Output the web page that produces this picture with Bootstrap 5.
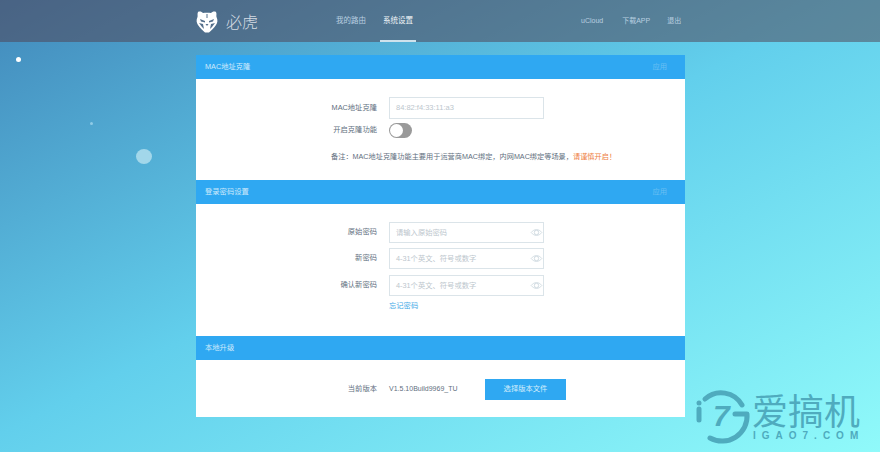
<!DOCTYPE html>
<html lang="zh-CN">
<head>
    <meta charset="UTF-8">
    <meta name="viewport" content="width=device-width, initial-scale=1.0">
    <title>必虎 - 系统设置</title>
    <link href="https://cdn.jsdelivr.net/npm/bootstrap@5.3.0/dist/css/bootstrap.min.css" rel="stylesheet">
    <style>
        html, body { height: 100%; }
        body {
            position: relative;
            overflow: hidden;
            background: linear-gradient(to bottom right, #4289bb 0%, #62cfec 48%, #90fafa 100%);
            font-family: "Liberation Sans", "Noto Sans CJK SC", sans-serif;
            font-size: 7.3px;
            color: #5f6f80;
        }
        .top-bar {
            height: 42px;
            padding-left: 196px;
            background: rgba(80, 62, 78, .5);
        }
        .brand-name {
            width: 140px;
            font-family: "Noto Sans CJK SC", sans-serif;
            font-weight: 300;
            font-size: 16px;
            color: #d5dce3;
        }
        .top-link {
            height: 42px;
            line-height: 42px;
            color: #b9cfe0;
            text-decoration: none;
        }
        .top-link.on {
            color: #f2f6f9;
            padding: 0 3px;
            border-bottom: 2px solid #cfe2ec;
        }
        .links-left { width: 245px; gap: 14px; font-size: 7.5px; }
        .links-right { font-size: 7px; }
        .link-ucloud { margin-right: 19px; }
        .link-app { margin-right: 17px; }
        .panel-box {
            width: 489px;
            margin: 13px 0 0 196px;
            background: #fff;
        }
        .panel-head {
            height: 24px;
            padding: 1px 18px 0 9px;
            background: #2fa8f2;
            color: #cfeafc;
        }
        .apply-text { color: #69bff2; }
        .panel-part { padding-top: 18px; }
        .part-mac { height: 101px; }
        .part-pwd { height: 132px; }
        .part-ver { height: 57px; padding-top: 19px; }
        .field-row { display: flex; align-items: center; gap: 12px; }
        .field-label { width: 181px; text-align: right; }
        .field-box {
            position: relative;
            width: 155px;
            height: 21px;
            line-height: 19px;
            padding: 0 6px;
            border: 1px solid #dbe4e9;
            color: #bcc6cd;
        }
        .eye-icon { position: absolute; right: 0; top: 5px; }
        .row-gap { margin-top: 5px; }
        .row-gap-b { margin-top: 6px; }
        .mac-box { height: 22px; line-height: 20px; font-size: 7.5px; }
        .switch-off {
            position: relative;
            width: 23px;
            height: 15px;
            border-radius: 8px;
            background: #9a9a9a;
        }
        .switch-off::after {
            content: "";
            position: absolute;
            left: 1px;
            top: 1px;
            width: 13px;
            height: 13px;
            border-radius: 50%;
            background: #fff;
        }
        .note-line { margin: 13px 0 0 135px; line-height: 12px; font-size: 7.2px; }
        .warn-text { color: #ee7d3e; }
        .forget-link { display: block; margin: 4px 0 0 193px; color: #3fa9e6; text-decoration: none; line-height: 12px; }
        .ver-text { width: 81px; font-size: 7px; }
        .pick-btn {
            width: 81px;
            height: 21px;
            margin-left: 3px;
            padding: 0;
            border: 0;
            border-radius: 0;
            background: #2fa8f2;
            color: #d5eefc;
            font-size: 7.3px;
        }
        .dot-spot { position: absolute; border-radius: 50%; }
        .dot-a { left: 16px; top: 57px; width: 5px; height: 5px; background: #fff; }
        .dot-b { left: 90px; top: 122px; width: 3px; height: 3px; background: #8fcbe6; }
        .dot-c { left: 136px; top: 149px; width: 16px; height: 15px; background: #a2d7ea; }
        .mark-wrap { position: absolute; left: 693px; top: 386px; color: #4fabbe; }
        .mark-name {
            position: absolute;
            left: 59px;
            top: 3px;
            width: 120px;
            font-family: "Noto Sans CJK SC", sans-serif;
            font-weight: 400;
            font-size: 36px;
            line-height: 40px;
        }
        .mark-url {
            position: absolute;
            left: 60px;
            top: 44px;
            width: 130px;
            font-size: 10px;
            font-weight: 700;
            letter-spacing: 6px;
            line-height: 12px;
        }
        .mark-seven {
            position: absolute;
            left: 20px;
            top: 14px;
            font-size: 30px;
            font-weight: 700;
            font-style: italic;
            line-height: 32px;
        }
    </style>
</head>
<body>
    <div class="top-bar d-flex align-items-center">
        <div class="brand-name d-flex align-items-center gap-2">
            <svg width="22" height="23" viewBox="0 0 22 23">
                <path fill="#fff" d="M2 2C4 1 6 2 7 3c2-.5 6-.5 8 0 1-1 3-2 5-1 1 2 0 4 .5 5 1.500 3 1 6-.5 8-2 3-5 6-7 7.500H9C7 21 4 18 2 15 .5 13 0 10 1.500 7 2 6 1 4 2 2z"/>
                <path fill="#55708c" d="M4 9l5 2v1.500l-4-1zM18 9l-5 2v1.500l4-1zM3 13l4 1 1 5-2-2zM19 13l-4 1-1 5 2-2zM9.500 14h3L11 16zM10.500 4h1v4h-1z"/>
            </svg>
            <span>必虎</span>
        </div>
        <div class="links-left d-flex">
            <a class="top-link" href="#">我的路由</a>
            <a class="top-link on" href="#">系统设置</a>
        </div>
        <div class="links-right d-flex">
            <a class="top-link link-ucloud" href="#">uCloud</a>
            <a class="top-link link-app" href="#">下载APP</a>
            <a class="top-link" href="#">退出</a>
        </div>
    </div>

    <div class="panel-box">
        <div class="panel-head d-flex align-items-center justify-content-between">
            <span>MAC地址克隆</span><span class="apply-text">应用</span>
        </div>
        <div class="panel-part part-mac">
            <div class="field-row">
                <div class="field-label">MAC地址克隆</div>
                <div class="field-box mac-box">84:82:f4:33:11:a3</div>
            </div>
            <div class="field-row mt-1">
                <div class="field-label">开启克隆功能</div>
                <div class="switch-off"></div>
            </div>
            <div class="note-line">备注：MAC地址克隆功能主要用于运营商MAC绑定，内网MAC绑定等场景，<span class="warn-text">请谨慎开启！</span></div>
        </div>

        <div class="panel-head d-flex align-items-center justify-content-between">
            <span>登录密码设置</span><span class="apply-text">应用</span>
        </div>
        <div class="panel-part part-pwd">
            <div class="field-row">
                <div class="field-label">原始密码</div>
                <div class="field-box">请输入原始密码
                    <svg class="eye-icon" width="13" height="9" viewBox="0 0 12 9" fill="none" stroke="#d3dde3"><path d="M.7 4.500C3.500.7 8.500.7 11.300 4.500 8.500 8.300 3.500 8.300.7 4.500z"/><circle cx="6" cy="4.500" r="2.200"/></svg>
                </div>
            </div>
            <div class="field-row row-gap">
                <div class="field-label">新密码</div>
                <div class="field-box">4-31个英文、符号或数字
                    <svg class="eye-icon" width="13" height="9" viewBox="0 0 12 9" fill="none" stroke="#d3dde3"><path d="M.7 4.500C3.500.7 8.500.7 11.300 4.500 8.500 8.300 3.500 8.300.7 4.500z"/><circle cx="6" cy="4.500" r="2.200"/></svg>
                </div>
            </div>
            <div class="field-row row-gap-b">
                <div class="field-label">确认新密码</div>
                <div class="field-box">4-31个英文、符号或数字
                    <svg class="eye-icon" width="13" height="9" viewBox="0 0 12 9" fill="none" stroke="#d3dde3"><path d="M.7 4.500C3.500.7 8.500.7 11.300 4.500 8.500 8.300 3.500 8.300.7 4.500z"/><circle cx="6" cy="4.500" r="2.200"/></svg>
                </div>
            </div>
            <a class="forget-link" href="#">忘记密码</a>
        </div>

        <div class="panel-head d-flex align-items-center">
            <span>本地升级</span>
        </div>
        <div class="panel-part part-ver">
            <div class="field-row">
                <div class="field-label">当前版本</div>
                <div class="ver-text">V1.5.10Build9969_TU</div>
                <button class="btn pick-btn" type="button">选择版本文件</button>
            </div>
        </div>
    </div>

    <span class="dot-spot dot-a"></span>
    <span class="dot-spot dot-b"></span>
    <span class="dot-spot dot-c"></span>

    <div class="mark-wrap">
        <svg width="58" height="58" viewBox="0 0 58 58" fill="none" stroke="currentColor" stroke-width="5" stroke-linecap="round" stroke-linejoin="round">
            <path d="M12 13A24 24 0 0 1 49 19"/>
            <path d="M42 28H54A25 25 0 0 1 17 52"/>
            <path d="M6 23V34"/>
            <path d="M6 17v.1"/>
        </svg>
        <span class="mark-seven">7</span>
        <div class="mark-name">爱搞机</div>
        <div class="mark-url">IGAO7.COM</div>
    </div>
</body>
</html>
